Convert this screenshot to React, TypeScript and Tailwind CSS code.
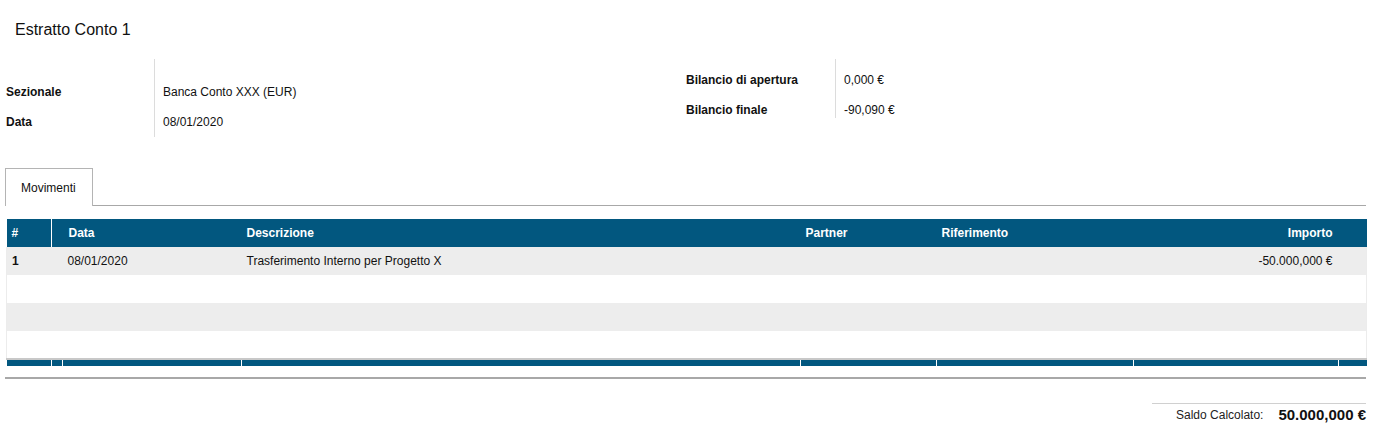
import React from "react";

const COLS = [45, 11, 179, 559, 136, 197, 205, 28];

const rows = [
  { n: "1", data: "08/01/2020", desc: "Trasferimento Interno per Progetto X", partner: "", rif: "", importo: "-50.000,000 €" },
  null,
  null,
  null,
];

function InfoBlock({ items, labelW, height, top }: { items: [string, string][]; labelW: string; height: string; top: string }) {
  return (
    <div className="flex">
      <div className={`${labelW} ${top} flex flex-col`}>
        {items.map(([l]) => (
          <div key={l} className="h-[30px] flex items-center font-bold text-[12px] text-[#111]">
            {l}
          </div>
        ))}
      </div>
      <div className={`${height} ${top} border-l border-[#dcdcdc] pl-[8px] flex flex-col`}>
        {items.map(([l, v]) => (
          <div key={l} className="h-[30px] shrink-0 flex items-center text-[12px] text-[#111]">
            {v}
          </div>
        ))}
      </div>
    </div>
  );
}

export default function App() {
  return (
    <div className="w-[1380px] h-[438px] bg-white overflow-hidden font-['Liberation_Sans',Arial,sans-serif] text-[#111]">
      <div className="pt-[20px] pl-[15px] h-[40px] text-[16px] leading-[20px]">Estratto Conto 1</div>

      <div className="mt-[19px] flex pl-[6px]">
        <div className="w-[680px]">
          <InfoBlock
            items={[
              ["Sezionale", "Banca Conto XXX (EUR)"],
              ["Data", "08/01/2020"],
            ]}
            labelW="w-[148px]"
            height="h-[78px]"
            top="pt-[18px]"
          />
        </div>
        <InfoBlock
          items={[
            ["Bilancio di apertura", "0,000 €"],
            ["Bilancio finale", "-90,090 €"],
          ]}
          labelW="w-[149px]"
          height="h-[59px]"
          top="pt-[6px]"
        />
      </div>

      <div className="mt-[31px] mx-[5px] w-[1361px] flex border-b border-[#a8a8a8]">
        <div className="w-[88px] h-[38px] -mb-px border border-b-0 border-[#b4b4b4] bg-white pl-[15px] flex items-center text-[12px]">
          Movimenti
        </div>
      </div>

      <div className="mt-[13px] ml-[6px] w-[1360px]">
        <table className="table-fixed border-collapse w-[1360px] text-[12px]">
          <colgroup>
            {COLS.map((w, i) => (
              <col key={i} style={{ width: w }} />
            ))}
          </colgroup>
          <thead>
            <tr className="bg-[#02577f] text-white font-bold h-[28px]">
              <th className="text-left pl-[5px] border-r border-white font-bold">#</th>
              <th></th>
              <th className="text-left pl-[6px] font-bold">Data</th>
              <th className="text-left pl-[5px] font-bold">Descrizione</th>
              <th className="text-left pl-[5px] font-bold">Partner</th>
              <th className="text-left pl-[5px] font-bold">Riferimento</th>
              <th className="text-right pr-[6px] font-bold">Importo</th>
              <th></th>
            </tr>
          </thead>
          <tbody className="border-x border-[#ececec]">
            {rows.map((r, i) => (
              <tr key={i} className={`h-[28px] ${i % 2 === 0 ? "bg-[#ededed]" : "bg-white"}`}>
                <td className="pl-[5px] font-bold">{r?.n}</td>
                <td></td>
                <td className="pl-[5px]">{r?.data}</td>
                <td className="pl-[5px]">{r?.desc}</td>
                <td className="pl-[5px]">{r?.partner}</td>
                <td className="pl-[5px]">{r?.rif}</td>
                <td className="text-right pr-[6px]">{r?.importo}</td>
                <td></td>
              </tr>
            ))}
          </tbody>
          <tfoot>
            <tr className="h-[7px] bg-[#02577f] border-t-2 border-[#c8c8c8]">
              {COLS.map((_, i) => (
                <td key={i} className={`p-0 ${i < COLS.length - 1 ? "border-r border-white" : ""}`}></td>
              ))}
            </tr>
          </tfoot>
        </table>
      </div>

      <div className="mt-[11px] mx-[5px] w-[1361px] border-t-2 border-[#a8a8a8]"></div>

      <div className="mt-[24px] flex justify-end pr-[14px]">
        <div className="w-[214px] border-t border-[#d0d0d0] flex items-center justify-end h-[23px] gap-[15px]">
          <span className="text-[12px] text-[#222]">Saldo Calcolato:</span>
          <span className="text-[15px] font-bold text-[#111]">50.000,000 €</span>
        </div>
      </div>
    </div>
  );
}
